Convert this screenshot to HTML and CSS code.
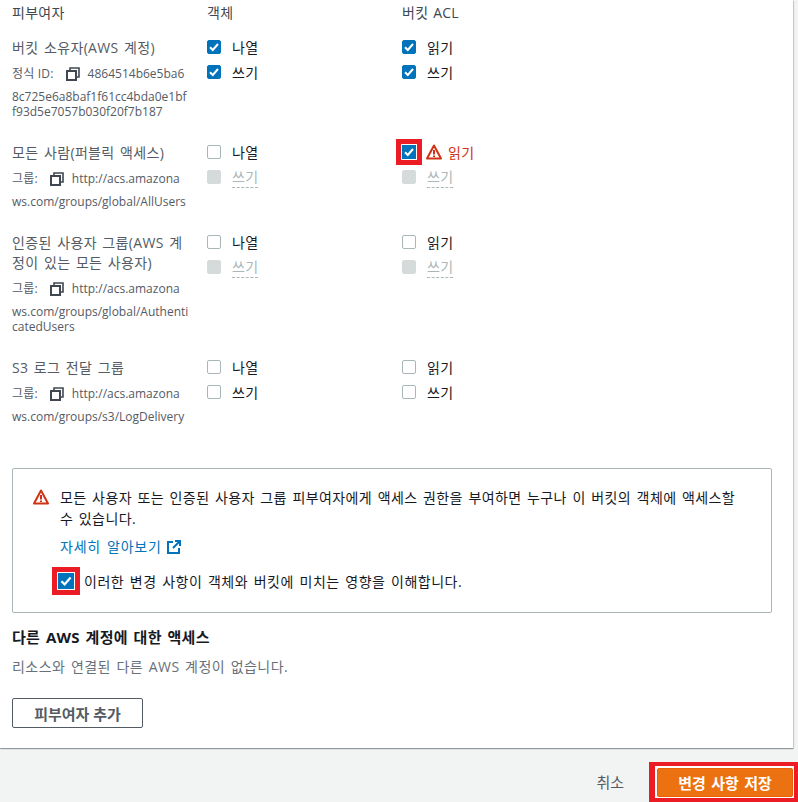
FILE: index.html
```html
<!DOCTYPE html>
<html lang="ko">
<head>
<meta charset="utf-8">
<title>ACL 편집</title>
<link rel="stylesheet" href="styles.css">
</head>
<body>
<main class="panel">
  <svg width="0" height="0" class="defs">
    <defs>
      <symbol id="tick" viewBox="0 0 14 14"><path d="M3 7.2l2.8 2.8L11 4" fill="none" stroke="#fff" stroke-width="2"/></symbol>
      <symbol id="copy" viewBox="0 0 14 14"><path d="M4 3.5V1h9v9h-2.5" fill="none" stroke="#414750" stroke-width="1.6"/><rect x="1" y="4" width="9" height="9" fill="none" stroke="#414750" stroke-width="2"/></symbol>
      <symbol id="warn" viewBox="0 0 16 16"><path d="M8 1.5L15 14.5H1Z" fill="none" stroke="#d13212" stroke-width="2" stroke-linejoin="round"/><path d="M8 6v4.4M8 11.4v1.6" stroke="#d13212" stroke-width="2"/></symbol>
    </defs>
  </svg>
  <div class="acl">
    <div class="head">피부여자</div><div class="head">객체</div><div class="head">버킷 ACL</div>

    <div class="cell grantee">
      <div class="name">버킷 소유자(AWS 계정)</div>
      <div class="idline"><span class="tag">정식 ID:</span><svg class="copy"><use href="#copy"/></svg>4864514b6e5ba6</div>
      <div class="wrapped">8c725e6a8baf1f61cc4bda0e1bf<br>f93d5e7057b030f20f7b187</div>
    </div>
    <div class="cell perms">
      <div class="perm"><span class="box on"><svg><use href="#tick"/></svg></span>나열</div>
      <div class="perm"><span class="box on"><svg><use href="#tick"/></svg></span>쓰기</div>
    </div>
    <div class="cell perms">
      <div class="perm"><span class="box on"><svg><use href="#tick"/></svg></span>읽기</div>
      <div class="perm"><span class="box on"><svg><use href="#tick"/></svg></span>쓰기</div>
    </div>

    <div class="cell grantee">
      <div class="name">모든 사람(퍼블릭 액세스)</div>
      <div class="idline"><span class="tag">그룹:</span><svg class="copy"><use href="#copy"/></svg>http://acs.amazona</div>
      <div class="wrapped">ws.com/groups/global/AllUsers</div>
    </div>
    <div class="cell perms">
      <div class="perm"><span class="box"></span>나열</div>
      <div class="perm off"><span class="box dis"></span><span class="dash">쓰기</span></div>
    </div>
    <div class="cell perms">
      <div class="perm danger"><span class="box on mark"><svg><use href="#tick"/></svg></span><svg class="warn-s"><use href="#warn"/></svg>읽기</div>
      <div class="perm off"><span class="box dis"></span><span class="dash">쓰기</span></div>
    </div>

    <div class="cell grantee">
      <div class="name">인증된 사용자 그룹(AWS 계<br>정이 있는 모든 사용자)</div>
      <div class="idline"><span class="tag">그룹:</span><svg class="copy"><use href="#copy"/></svg>http://acs.amazona</div>
      <div class="wrapped">ws.com/groups/global/Authenti<br>catedUsers</div>
    </div>
    <div class="cell perms">
      <div class="perm"><span class="box"></span>나열</div>
      <div class="perm off"><span class="box dis"></span><span class="dash">쓰기</span></div>
    </div>
    <div class="cell perms">
      <div class="perm"><span class="box"></span>읽기</div>
      <div class="perm off"><span class="box dis"></span><span class="dash">쓰기</span></div>
    </div>

    <div class="cell grantee">
      <div class="name">S3 로그 전달 그룹</div>
      <div class="idline"><span class="tag">그룹:</span><svg class="copy"><use href="#copy"/></svg>http://acs.amazona</div>
      <div class="wrapped">ws.com/groups/s3/LogDelivery</div>
    </div>
    <div class="cell perms">
      <div class="perm"><span class="box"></span>나열</div>
      <div class="perm"><span class="box"></span>쓰기</div>
    </div>
    <div class="cell perms">
      <div class="perm"><span class="box"></span>읽기</div>
      <div class="perm"><span class="box"></span>쓰기</div>
    </div>
  </div>

  <section class="notice">
    <svg class="warn-l"><use href="#warn"/></svg>
    <div class="notice-body">
      <p class="notice-text">모든 사용자 또는 인증된 사용자 그룹 피부여자에게 액세스 권한을 부여하면 누구나 이 버킷의 객체에 액세스할<br>수 있습니다.</p>
      <a class="more" href="#">자세히 알아보기<svg class="ext" viewBox="0 0 14 14"><path d="M6 2H1v11h11V8" fill="none" stroke="#0073bb" stroke-width="2"/><path d="M8 1h5v5M13 1L6 8" fill="none" stroke="#0073bb" stroke-width="2"/></svg></a>
      <label class="ack"><span class="box on mark big"><svg><use href="#tick"/></svg></span>이러한 변경 사항이 객체와 버킷에 미치는 영향을 이해합니다.</label>
    </div>
  </section>

  <h2 class="title">다른 AWS 계정에 대한 액세스</h2>
  <p class="empty">리소스와 연결된 다른 AWS 계정이 없습니다.</p>
  <button class="add" type="button">피부여자 추가</button>
</main>
<footer class="foot">
  <span class="cancel">취소</span>
  <span class="save-frame"><button class="save" type="button">변경 사항 저장</button></span>
</footer>
</body>
</html>
```
FILE: styles.css
```css
* { box-sizing: border-box; }
html, body { margin: 0; padding: 0; height: 802px; overflow: hidden; }
body {
  background: #f2f3f3;
  color: #16191f;
  font-family: "Open Sans", "Noto Sans CJK KR", sans-serif;
  font-size: 14px;
}
.defs { position: absolute; }
.panel {
  width: 793px;
  height: 748px;
  background: #fff;
  padding: 0 0 0 12px;
  box-shadow: 0 1px 1px 0 rgba(0, 28, 36, .3), 1px 1px 1px 0 rgba(0, 28, 36, .15);
}
.acl {
  display: grid;
  grid-template-columns: 195px 195px 195px;
  grid-template-rows: 26px 105px 90px 125px auto;
  height: 428px;
}
.head { font-size: 14px; line-height: 26px; color: #414750; letter-spacing: .25px; word-spacing: 1px; }
.cell { padding-top: 9px; }
.name { font-size: 14px; line-height: 20px; color: #545b64; padding-top: 3px; letter-spacing: .35px; word-spacing: 1.5px; }
.idline { font-size: 12px; line-height: 20px; color: #545b64; margin-top: 6px; white-space: nowrap; display: flex; align-items: center; }
.tag { letter-spacing: .2px; }
.copy { width: 14px; height: 14px; margin: 0 8px 0 12px; }
.wrapped { font-size: 12px; line-height: 15px; color: #545b64; margin-top: 5px; }
.perms { padding-top: 11px; }
.perm { display: flex; align-items: center; height: 20px; margin-bottom: 5px; color: #16191f; letter-spacing: .35px; }
.box {
  width: 14px; height: 14px; margin-right: 11px; border: 1px solid #aab7b8; border-radius: 2px;
  background: #fff; flex: none; display: block;
}
.box svg { display: block; width: 14px; height: 14px; margin: -1px; }
.box.on { background: #0073bb; border-color: #0073bb; }
.box.dis { background: #d5dbdb; border-color: #d5dbdb; }
.off { color: #aab7b8; }
.dash { border-bottom: 1px dashed #aab7b8; line-height: 20px; height: 21px; margin-top: 1px; }
.danger { color: #d13212; }
.mark { border-radius: 0; box-shadow: 0 0 0 1px #fff, 0 0 0 6px #ec1c24; margin-right: 10px; }
.warn-s { width: 16px; height: 16px; margin-right: 6px; }
.notice {
  display: flex;
  width: 760px;
  height: 145px;
  margin-top: 40px;
  border: 1px solid #aab7b8;
  border-radius: 2px;
  padding: 18px 20px 0 20px;
}
.warn-l { width: 16px; height: 16px; flex: none; margin: 2px 11px 0 0; }
.notice-body { flex: 1; }
.notice-text { margin: 0; line-height: 21px; letter-spacing: .4px; word-spacing: 1.5px; white-space: nowrap; }
.more { display: block; margin-top: 8px; line-height: 20px; color: #0073bb; text-decoration: none; letter-spacing: .8px; word-spacing: 1.5px; }
.ext { width: 14px; height: 14px; margin-left: 5px; vertical-align: -2px; }
.ack { display: flex; align-items: center; margin-top: 14px; height: 20px; letter-spacing: .5px; word-spacing: 1.5px; }
.big { margin-left: -2px; width: 16px; height: 16px; margin-right: 10px; }
.big svg { width: 16px; height: 16px; }
.title { margin: 14px 0 0; font-size: 15px; line-height: 20px; font-weight: 700; letter-spacing: .3px; word-spacing: 1.5px; }
.empty { margin: 10px 0 0; line-height: 20px; color: #687078; letter-spacing: .45px; word-spacing: 1.5px; }
.add {
  display: block; width: 131px; height: 30px; margin-top: 21px; padding: 0;
  background: #fff; border: 1px solid #545b64; border-radius: 2px;
  font: 700 15px "Open Sans", "Noto Sans CJK KR", sans-serif; color: #545b64;
}
.foot { display: flex; justify-content: flex-end; align-items: flex-end; height: 54px; }
.cancel { margin: 0 25px 10px 0; font-size: 15px; color: #545b64; }
.save-frame {
  display: block; width: 149px; height: 40px; background: #fff;
  border-style: solid; border-color: #ec1c24; border-width: 4px 4px 4px 6px;
  padding: 2px 1px 1px 2px;
}
.save {
  display: block; width: 100%; height: 100%; padding: 0;
  background: #ec7211; border: 1px solid #eb5f07; border-radius: 2px; color: #fff;
  font: 700 15px "Open Sans", "Noto Sans CJK KR", sans-serif; word-spacing: 1.5px;
}
```
